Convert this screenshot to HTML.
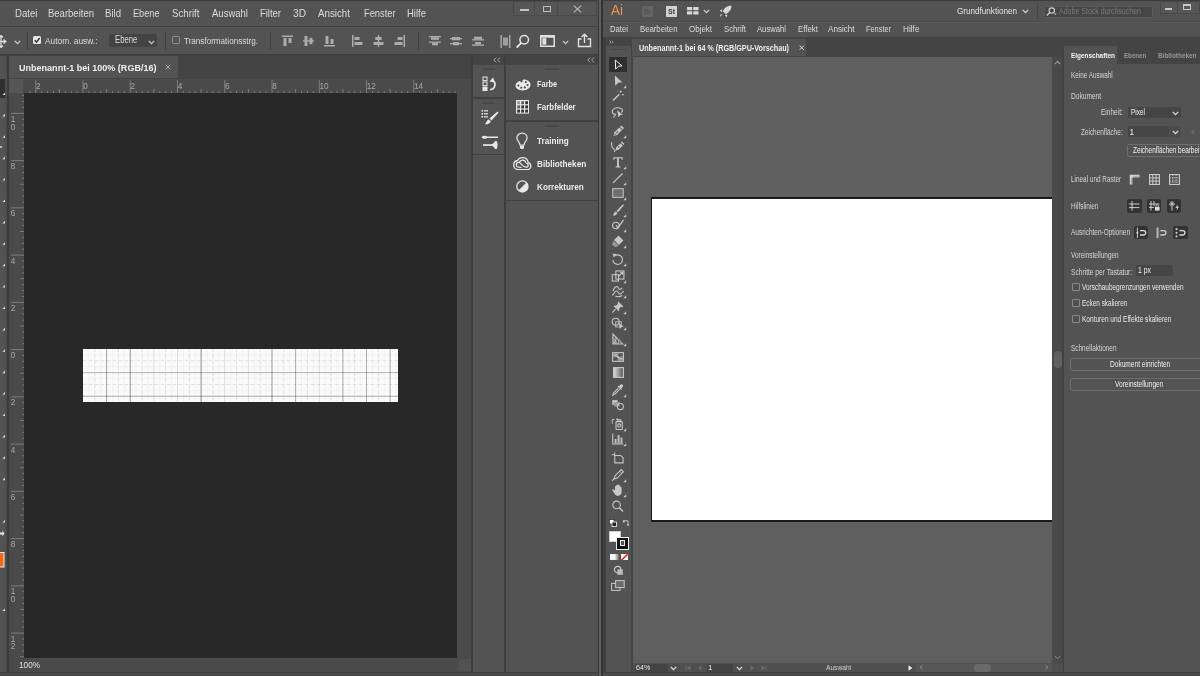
<!DOCTYPE html>
<html lang="de"><head><meta charset="utf-8"><title>Photoshop / Illustrator</title>
<style>
html,body{margin:0;padding:0;background:#535353;}
body{width:1200px;height:676px;overflow:hidden;position:relative;font-family:"Liberation Sans",sans-serif;}
#r{position:absolute;left:0;top:0;width:1200px;height:676px;overflow:hidden;will-change:transform;}
#r div,#r span,#r svg{position:absolute;}
.t{white-space:nowrap;transform-origin:0 50%;}
svg text{font-family:"Liberation Sans",sans-serif;}
</style></head><body><div id="r">
<div style="left:0px;top:0px;width:599px;height:676px;background:#535353;"></div>
<div style="left:0px;top:0px;width:1200px;height:1px;background:#3c3c3c;"></div>
<div style="left:0px;top:26px;width:599px;height:1px;background:#404040;"></div>
<div style="left:0px;top:54px;width:599px;height:2px;background:#404040;"></div>
<div style="left:0px;top:56px;width:472px;height:23px;background:#444444;"></div>
<div style="left:9.2px;top:56px;width:168.8px;height:22.3px;background:#535353;"></div>
<div style="left:0px;top:56px;width:5px;height:620px;background:#535353;"></div>
<div style="left:4.8px;top:56px;width:2.3px;height:620px;background:#4d4d4d;"></div>
<div style="left:7.1px;top:56px;width:2.1px;height:620px;background:#3c3c3c;"></div>
<div style="left:9.2px;top:79px;width:448px;height:14px;background:#4a4a4a;"></div>
<div style="left:9.2px;top:79px;width:14.6px;height:580px;background:#4a4a4a;"></div>
<div style="left:23.6px;top:92.8px;width:433.6px;height:565.4px;background:#282828;"></div>
<div style="left:9.2px;top:658.2px;width:448px;height:14px;background:#4a4a4a;"></div>
<div style="left:457.2px;top:79px;width:14.4px;height:593px;background:#4b4b4b;"></div>
<div style="left:458.5px;top:658.5px;width:12.5px;height:12.5px;background:#525252;"></div>
<div style="left:0px;top:672px;width:599px;height:1px;background:#404040;"></div>
<div style="left:0px;top:673px;width:599px;height:3px;background:#4a4a4a;"></div>
<div style="left:82.5px;top:349px;width:315.5px;height:53px;background:#fafafa;"></div>
<div style="left:471.3px;top:55px;width:1.8px;height:617px;background:#3e3e3e;"></div>
<div style="left:473px;top:55px;width:126px;height:10px;background:#444444;"></div>
<div style="left:504.2px;top:55px;width:2.3px;height:617px;background:#3e3e3e;"></div>
<div style="left:473px;top:97px;width:31px;height:2px;background:#404040;"></div>
<div style="left:473px;top:154px;width:31px;height:1px;background:#404040;"></div>
<div style="left:506px;top:120px;width:93px;height:2px;background:#404040;"></div>
<div style="left:506px;top:200px;width:93px;height:1px;background:#404040;"></div>
<div style="left:598px;top:0px;width:1px;height:676px;background:#3a3a3a;"></div>
<div style="left:599px;top:0px;width:2px;height:676px;background:#606060;"></div>
<div style="left:601px;top:0px;width:2px;height:676px;background:#333;"></div>
<div style="left:603px;top:0px;width:597px;height:676px;background:#535353;"></div>
<div style="left:603px;top:21px;width:597px;height:0.8px;background:#4d4d4d;"></div>
<div style="left:603px;top:21.8px;width:597px;height:0.8px;background:#595959;"></div>
<div style="left:603px;top:36.7px;width:597px;height:20px;background:#444444;"></div>
<div style="left:632px;top:39px;width:174px;height:17px;background:#535353;"></div>
<div style="left:603px;top:38px;width:3px;height:638px;background:#3f3f3f;"></div>
<div style="left:606px;top:38px;width:25px;height:8px;background:#444444;"></div>
<div style="left:606px;top:46px;width:25px;height:626px;background:#535353;"></div>
<div style="left:631px;top:56px;width:1.5px;height:616px;background:#444;"></div>
<div style="left:632.5px;top:56.6px;width:420px;height:606.4px;background:#5f5f5f;"></div>
<div style="left:651px;top:197px;width:402px;height:324.8px;background:#1a1a1a;"></div>
<div style="left:652.3px;top:198.5px;width:401px;height:321.7px;background:#fff;"></div>
<div style="left:1052px;top:56.6px;width:10.5px;height:616px;background:#4a4a4a;"></div>
<div style="left:1062.2px;top:46px;width:2.1px;height:626px;background:#424242;"></div>
<div style="left:632.5px;top:663px;width:430px;height:9px;background:#4f4f4f;"></div>
<div style="left:1064.2px;top:46px;width:136px;height:18px;background:#444444;"></div>
<div style="left:1064.2px;top:46px;width:53.2px;height:18px;background:#535353;"></div>
<div style="left:603px;top:672px;width:597px;height:1px;background:#404040;"></div>
<div style="left:603px;top:673px;width:597px;height:3px;background:#4a4a4a;"></div>
<span class="t" style="left:14.5px;top:8.80px;font-size:10.4px;line-height:10.4px;color:#dcdcdc;transform:scaleX(0.9267);">Datei</span>
<span class="t" style="left:48px;top:8.80px;font-size:10.4px;line-height:10.4px;color:#dcdcdc;transform:scaleX(0.9144);">Bearbeiten</span>
<span class="t" style="left:105px;top:8.80px;font-size:10.4px;line-height:10.4px;color:#dcdcdc;transform:scaleX(0.9226);">Bild</span>
<span class="t" style="left:133px;top:8.80px;font-size:10.4px;line-height:10.4px;color:#dcdcdc;transform:scaleX(0.8812);">Ebene</span>
<span class="t" style="left:171.5px;top:8.80px;font-size:10.4px;line-height:10.4px;color:#dcdcdc;transform:scaleX(0.9330);">Schrift</span>
<span class="t" style="left:211.5px;top:8.80px;font-size:10.4px;line-height:10.4px;color:#dcdcdc;transform:scaleX(0.9158);">Auswahl</span>
<span class="t" style="left:260px;top:8.80px;font-size:10.4px;line-height:10.4px;color:#dcdcdc;transform:scaleX(0.9086);">Filter</span>
<span class="t" style="left:293px;top:8.80px;font-size:10.4px;line-height:10.4px;color:#dcdcdc;transform:scaleX(0.9778);">3D</span>
<span class="t" style="left:318px;top:8.80px;font-size:10.4px;line-height:10.4px;color:#dcdcdc;transform:scaleX(0.9383);">Ansicht</span>
<span class="t" style="left:363.5px;top:8.80px;font-size:10.4px;line-height:10.4px;color:#dcdcdc;transform:scaleX(0.8934);">Fenster</span>
<span class="t" style="left:407px;top:8.80px;font-size:10.4px;line-height:10.4px;color:#dcdcdc;transform:scaleX(0.9132);">Hilfe</span>
<div style="left:512.5px;top:0.5px;width:84px;height:15px;background:#565656;border:1px solid #494949;box-sizing:border-box;"></div>
<div style="left:534.3px;top:1.5px;width:1px;height:13px;background:#494949;"></div>
<div style="left:557.3px;top:1.5px;width:1px;height:13px;background:#494949;"></div>
<div style="left:519.5px;top:9.2px;width:9px;height:2.2px;background:#c2c2c2;"></div>
<div style="left:542.5px;top:5.5px;width:8.5px;height:6.7px;background:transparent;border:1.3px solid #bcbcbc;border-top-width:1.8px;box-sizing:border-box;"></div>
<svg style="left:572.5px;top:5px;" width="9" height="8" viewBox="0 0 9 8"><path d="M0.8 0.6L8.2 7.4M8.2 0.6L0.8 7.4" stroke="#bcbcbc" stroke-width="1.1" fill="none"/></svg>
<div style="left:26.5px;top:32px;width:1px;height:18px;background:#3f3f3f;"></div>
<div style="left:164.5px;top:32px;width:1px;height:18px;background:#3f3f3f;"></div>
<div style="left:269.5px;top:32px;width:1px;height:18px;background:#3f3f3f;"></div>
<div style="left:417.5px;top:32px;width:1px;height:18px;background:#3f3f3f;"></div>
<svg style="left:0px;top:35px;" width="7" height="13" viewBox="0 0 7 13"><path d="M-3 6.5H5.5M1 0.5V12.5M3.5 4.5L6 6.5L3.5 8.5M-1 2.5L1 0.5L3 2.5M-1 10.5L1 12.5L3 10.5" stroke="#d8d8d8" stroke-width="1.3" fill="none"/></svg>
<svg style="left:14px;top:40px;" width="7" height="5" viewBox="0 0 7 5"><path d="M0.8 0.8L3.5 3.6L6.2 0.8" stroke="#d0d0d0" stroke-width="1.2" fill="none"/></svg>
<div style="left:33.2px;top:36px;width:8.2px;height:8.2px;background:#e6e6e6;border-radius:1.5px;"></div>
<svg style="left:33.2px;top:36px;" width="8.2" height="8.2" viewBox="0 0 8.2 8.2"><path d="M1.7 4.2L3.5 6.1L6.7 2" stroke="#333" stroke-width="1.4" fill="none"/></svg>
<span class="t" style="left:45px;top:35.97px;font-size:9.6px;line-height:9.6px;color:#dcdcdc;transform:scaleX(0.8707);">Autom. ausw.:</span>
<div style="left:109px;top:34px;width:48px;height:13px;background:#434343;border-radius:2px;"></div>
<span class="t" style="left:115px;top:35.14px;font-size:10px;line-height:10px;color:#dcdcdc;transform:scaleX(0.7712);">Ebene</span>
<svg style="left:148px;top:39.5px;" width="7" height="5" viewBox="0 0 7 5"><path d="M0.8 0.8L3.5 3.6L6.2 0.8" stroke="#d0d0d0" stroke-width="1.2" fill="none"/></svg>
<div style="left:171.8px;top:36.3px;width:8px;height:8px;background:transparent;border:1px solid #929292;border-radius:1.5px;box-sizing:border-box;"></div>
<span class="t" style="left:184px;top:35.97px;font-size:9.6px;line-height:9.6px;color:#dcdcdc;transform:scaleX(0.8440);">Transformationsstrg.</span>
<span class="t" style="left:18.5px;top:63.16px;font-size:9.5px;line-height:9.5px;color:#f0f0f0;font-weight:bold;transform:scaleX(0.9506);">Unbenannt-1 bei 100% (RGB/16)</span>
<svg style="left:164.5px;top:63.5px;" width="6" height="6" viewBox="0 0 6 6"><path d="M0.7 0.7L5.3 5.3M5.3 0.7L0.7 5.3" stroke="#b8b8b8" stroke-width="0.9" fill="none"/></svg>
<span class="t" style="left:19px;top:661.38px;font-size:9px;line-height:9px;color:#e0e0e0;transform:scaleX(0.9123);">100%</span>
<svg style="left:492.5px;top:56.6px;" width="8" height="6" viewBox="0 0 8 6"><path d="M3.2 0.6L0.8 3L3.2 5.4M7 0.6L4.6 3L7 5.4" stroke="#b4b4b4" stroke-width="0.9" fill="none"/></svg>
<svg style="left:586.7px;top:56.6px;" width="8" height="6" viewBox="0 0 8 6"><path d="M3.2 0.6L0.8 3L3.2 5.4M7 0.6L4.6 3L7 5.4" stroke="#b4b4b4" stroke-width="0.9" fill="none"/></svg>
<div style="left:483px;top:68px;width:12px;height:1.5px;background:#484848;"></div>
<div style="left:483px;top:102px;width:12px;height:1.5px;background:#484848;"></div>
<div style="left:545px;top:68px;width:14px;height:1.5px;background:#484848;"></div>
<div style="left:545px;top:125px;width:14px;height:1.5px;background:#484848;"></div>
<span class="t" style="left:537.3px;top:79.26px;font-size:9.5px;line-height:9.5px;color:#ececec;font-weight:bold;transform:scaleX(0.7808);">Farbe</span>
<span class="t" style="left:537.3px;top:102.36px;font-size:9.5px;line-height:9.5px;color:#ececec;font-weight:bold;transform:scaleX(0.8330);">Farbfelder</span>
<span class="t" style="left:537.3px;top:135.66px;font-size:9.5px;line-height:9.5px;color:#ececec;font-weight:bold;transform:scaleX(0.8580);">Training</span>
<span class="t" style="left:537.3px;top:158.96px;font-size:9.5px;line-height:9.5px;color:#ececec;font-weight:bold;transform:scaleX(0.8631);">Bibliotheken</span>
<span class="t" style="left:537.3px;top:181.96px;font-size:9.5px;line-height:9.5px;color:#ececec;font-weight:bold;transform:scaleX(0.8588);">Korrekturen</span>
<div style="left:9.2px;top:79px;width:14.3px;height:13.8px;background:#565656;"></div>
<svg style="left:24px;top:79px;" width="434" height="14" viewBox="0 0 434 14"><rect x="11.25" y="1" width="1" height="13" fill="#7c7c7c"/><text x="12.05" y="9.9" font-size="8.2" fill="#a8a8a8">2</text><rect x="58.50" y="1" width="1" height="13" fill="#7c7c7c"/><text x="59.30" y="9.9" font-size="8.2" fill="#a8a8a8">0</text><rect x="105.75" y="1" width="1" height="13" fill="#7c7c7c"/><text x="106.55" y="9.9" font-size="8.2" fill="#a8a8a8">2</text><rect x="153.00" y="1" width="1" height="13" fill="#7c7c7c"/><text x="153.80" y="9.9" font-size="8.2" fill="#a8a8a8">4</text><rect x="200.25" y="1" width="1" height="13" fill="#7c7c7c"/><text x="201.05" y="9.9" font-size="8.2" fill="#a8a8a8">6</text><rect x="247.50" y="1" width="1" height="13" fill="#7c7c7c"/><text x="248.30" y="9.9" font-size="8.2" fill="#a8a8a8">8</text><rect x="294.75" y="1" width="1" height="13" fill="#7c7c7c"/><text x="295.55" y="9.9" font-size="8.2" fill="#a8a8a8">10</text><rect x="342.00" y="1" width="1" height="13" fill="#7c7c7c"/><text x="342.80" y="9.9" font-size="8.2" fill="#a8a8a8">12</text><rect x="389.25" y="1" width="1" height="13" fill="#7c7c7c"/><text x="390.05" y="9.9" font-size="8.2" fill="#a8a8a8">14</text><rect x="5.34" y="12" width="1" height="2" fill="#7c7c7c"/><rect x="17.16" y="12" width="1" height="2" fill="#7c7c7c"/><rect x="23.06" y="12" width="1" height="2" fill="#7c7c7c"/><rect x="28.97" y="12" width="1" height="2" fill="#7c7c7c"/><rect x="34.88" y="10" width="1" height="4" fill="#7c7c7c"/><rect x="40.78" y="12" width="1" height="2" fill="#7c7c7c"/><rect x="46.69" y="12" width="1" height="2" fill="#7c7c7c"/><rect x="52.59" y="12" width="1" height="2" fill="#7c7c7c"/><rect x="64.41" y="12" width="1" height="2" fill="#7c7c7c"/><rect x="70.31" y="12" width="1" height="2" fill="#7c7c7c"/><rect x="76.22" y="12" width="1" height="2" fill="#7c7c7c"/><rect x="82.12" y="10" width="1" height="4" fill="#7c7c7c"/><rect x="88.03" y="12" width="1" height="2" fill="#7c7c7c"/><rect x="93.94" y="12" width="1" height="2" fill="#7c7c7c"/><rect x="99.84" y="12" width="1" height="2" fill="#7c7c7c"/><rect x="111.66" y="12" width="1" height="2" fill="#7c7c7c"/><rect x="117.56" y="12" width="1" height="2" fill="#7c7c7c"/><rect x="123.47" y="12" width="1" height="2" fill="#7c7c7c"/><rect x="129.38" y="10" width="1" height="4" fill="#7c7c7c"/><rect x="135.28" y="12" width="1" height="2" fill="#7c7c7c"/><rect x="141.19" y="12" width="1" height="2" fill="#7c7c7c"/><rect x="147.09" y="12" width="1" height="2" fill="#7c7c7c"/><rect x="158.91" y="12" width="1" height="2" fill="#7c7c7c"/><rect x="164.81" y="12" width="1" height="2" fill="#7c7c7c"/><rect x="170.72" y="12" width="1" height="2" fill="#7c7c7c"/><rect x="176.62" y="10" width="1" height="4" fill="#7c7c7c"/><rect x="182.53" y="12" width="1" height="2" fill="#7c7c7c"/><rect x="188.44" y="12" width="1" height="2" fill="#7c7c7c"/><rect x="194.34" y="12" width="1" height="2" fill="#7c7c7c"/><rect x="206.16" y="12" width="1" height="2" fill="#7c7c7c"/><rect x="212.06" y="12" width="1" height="2" fill="#7c7c7c"/><rect x="217.97" y="12" width="1" height="2" fill="#7c7c7c"/><rect x="223.88" y="10" width="1" height="4" fill="#7c7c7c"/><rect x="229.78" y="12" width="1" height="2" fill="#7c7c7c"/><rect x="235.69" y="12" width="1" height="2" fill="#7c7c7c"/><rect x="241.59" y="12" width="1" height="2" fill="#7c7c7c"/><rect x="253.41" y="12" width="1" height="2" fill="#7c7c7c"/><rect x="259.31" y="12" width="1" height="2" fill="#7c7c7c"/><rect x="265.22" y="12" width="1" height="2" fill="#7c7c7c"/><rect x="271.12" y="10" width="1" height="4" fill="#7c7c7c"/><rect x="277.03" y="12" width="1" height="2" fill="#7c7c7c"/><rect x="282.94" y="12" width="1" height="2" fill="#7c7c7c"/><rect x="288.84" y="12" width="1" height="2" fill="#7c7c7c"/><rect x="300.66" y="12" width="1" height="2" fill="#7c7c7c"/><rect x="306.56" y="12" width="1" height="2" fill="#7c7c7c"/><rect x="312.47" y="12" width="1" height="2" fill="#7c7c7c"/><rect x="318.38" y="10" width="1" height="4" fill="#7c7c7c"/><rect x="324.28" y="12" width="1" height="2" fill="#7c7c7c"/><rect x="330.19" y="12" width="1" height="2" fill="#7c7c7c"/><rect x="336.09" y="12" width="1" height="2" fill="#7c7c7c"/><rect x="347.91" y="12" width="1" height="2" fill="#7c7c7c"/><rect x="353.81" y="12" width="1" height="2" fill="#7c7c7c"/><rect x="359.72" y="12" width="1" height="2" fill="#7c7c7c"/><rect x="365.62" y="10" width="1" height="4" fill="#7c7c7c"/><rect x="371.53" y="12" width="1" height="2" fill="#7c7c7c"/><rect x="377.44" y="12" width="1" height="2" fill="#7c7c7c"/><rect x="383.34" y="12" width="1" height="2" fill="#7c7c7c"/><rect x="395.16" y="12" width="1" height="2" fill="#7c7c7c"/><rect x="401.06" y="12" width="1" height="2" fill="#7c7c7c"/><rect x="406.97" y="12" width="1" height="2" fill="#7c7c7c"/><rect x="412.88" y="10" width="1" height="4" fill="#7c7c7c"/><rect x="418.78" y="12" width="1" height="2" fill="#7c7c7c"/><rect x="424.69" y="12" width="1" height="2" fill="#7c7c7c"/><rect x="430.59" y="12" width="1" height="2" fill="#7c7c7c"/></svg>
<svg style="left:10px;top:93px;" width="14" height="565" viewBox="0 0 14 565"><rect x="1" y="19.85" width="13" height="1" fill="#7c7c7c"/><text x="0.7" y="28.85" font-size="8.2" fill="#a8a8a8">1</text><text x="0.7" y="36.55" font-size="8.2" fill="#a8a8a8">0</text><rect x="1" y="67.10" width="13" height="1" fill="#7c7c7c"/><text x="0.7" y="76.10" font-size="8.2" fill="#a8a8a8">8</text><rect x="1" y="114.35" width="13" height="1" fill="#7c7c7c"/><text x="0.7" y="123.35" font-size="8.2" fill="#a8a8a8">6</text><rect x="1" y="161.60" width="13" height="1" fill="#7c7c7c"/><text x="0.7" y="170.60" font-size="8.2" fill="#a8a8a8">4</text><rect x="1" y="208.85" width="13" height="1" fill="#7c7c7c"/><text x="0.7" y="217.85" font-size="8.2" fill="#a8a8a8">2</text><rect x="1" y="256.10" width="13" height="1" fill="#7c7c7c"/><text x="0.7" y="265.10" font-size="8.2" fill="#a8a8a8">0</text><rect x="1" y="303.35" width="13" height="1" fill="#7c7c7c"/><text x="0.7" y="312.35" font-size="8.2" fill="#a8a8a8">2</text><rect x="1" y="350.60" width="13" height="1" fill="#7c7c7c"/><text x="0.7" y="359.60" font-size="8.2" fill="#a8a8a8">4</text><rect x="1" y="397.85" width="13" height="1" fill="#7c7c7c"/><text x="0.7" y="406.85" font-size="8.2" fill="#a8a8a8">6</text><rect x="1" y="445.10" width="13" height="1" fill="#7c7c7c"/><text x="0.7" y="454.10" font-size="8.2" fill="#a8a8a8">8</text><rect x="1" y="492.35" width="13" height="1" fill="#7c7c7c"/><text x="0.7" y="501.35" font-size="8.2" fill="#a8a8a8">1</text><text x="0.7" y="509.05" font-size="8.2" fill="#a8a8a8">0</text><rect x="1" y="539.60" width="13" height="1" fill="#7c7c7c"/><text x="0.7" y="548.60" font-size="8.2" fill="#a8a8a8">1</text><text x="0.7" y="556.30" font-size="8.2" fill="#a8a8a8">2</text><rect x="12" y="2.13" width="2" height="1" fill="#7c7c7c"/><rect x="12" y="8.04" width="2" height="1" fill="#7c7c7c"/><rect x="12" y="13.94" width="2" height="1" fill="#7c7c7c"/><rect x="12" y="25.76" width="2" height="1" fill="#7c7c7c"/><rect x="12" y="31.66" width="2" height="1" fill="#7c7c7c"/><rect x="12" y="37.57" width="2" height="1" fill="#7c7c7c"/><rect x="10" y="43.48" width="4" height="1" fill="#7c7c7c"/><rect x="12" y="49.38" width="2" height="1" fill="#7c7c7c"/><rect x="12" y="55.29" width="2" height="1" fill="#7c7c7c"/><rect x="12" y="61.19" width="2" height="1" fill="#7c7c7c"/><rect x="12" y="73.01" width="2" height="1" fill="#7c7c7c"/><rect x="12" y="78.91" width="2" height="1" fill="#7c7c7c"/><rect x="12" y="84.82" width="2" height="1" fill="#7c7c7c"/><rect x="10" y="90.73" width="4" height="1" fill="#7c7c7c"/><rect x="12" y="96.63" width="2" height="1" fill="#7c7c7c"/><rect x="12" y="102.54" width="2" height="1" fill="#7c7c7c"/><rect x="12" y="108.44" width="2" height="1" fill="#7c7c7c"/><rect x="12" y="120.26" width="2" height="1" fill="#7c7c7c"/><rect x="12" y="126.16" width="2" height="1" fill="#7c7c7c"/><rect x="12" y="132.07" width="2" height="1" fill="#7c7c7c"/><rect x="10" y="137.98" width="4" height="1" fill="#7c7c7c"/><rect x="12" y="143.88" width="2" height="1" fill="#7c7c7c"/><rect x="12" y="149.79" width="2" height="1" fill="#7c7c7c"/><rect x="12" y="155.69" width="2" height="1" fill="#7c7c7c"/><rect x="12" y="167.51" width="2" height="1" fill="#7c7c7c"/><rect x="12" y="173.41" width="2" height="1" fill="#7c7c7c"/><rect x="12" y="179.32" width="2" height="1" fill="#7c7c7c"/><rect x="10" y="185.23" width="4" height="1" fill="#7c7c7c"/><rect x="12" y="191.13" width="2" height="1" fill="#7c7c7c"/><rect x="12" y="197.04" width="2" height="1" fill="#7c7c7c"/><rect x="12" y="202.94" width="2" height="1" fill="#7c7c7c"/><rect x="12" y="214.76" width="2" height="1" fill="#7c7c7c"/><rect x="12" y="220.66" width="2" height="1" fill="#7c7c7c"/><rect x="12" y="226.57" width="2" height="1" fill="#7c7c7c"/><rect x="10" y="232.48" width="4" height="1" fill="#7c7c7c"/><rect x="12" y="238.38" width="2" height="1" fill="#7c7c7c"/><rect x="12" y="244.29" width="2" height="1" fill="#7c7c7c"/><rect x="12" y="250.19" width="2" height="1" fill="#7c7c7c"/><rect x="12" y="262.01" width="2" height="1" fill="#7c7c7c"/><rect x="12" y="267.91" width="2" height="1" fill="#7c7c7c"/><rect x="12" y="273.82" width="2" height="1" fill="#7c7c7c"/><rect x="10" y="279.73" width="4" height="1" fill="#7c7c7c"/><rect x="12" y="285.63" width="2" height="1" fill="#7c7c7c"/><rect x="12" y="291.54" width="2" height="1" fill="#7c7c7c"/><rect x="12" y="297.44" width="2" height="1" fill="#7c7c7c"/><rect x="12" y="309.26" width="2" height="1" fill="#7c7c7c"/><rect x="12" y="315.16" width="2" height="1" fill="#7c7c7c"/><rect x="12" y="321.07" width="2" height="1" fill="#7c7c7c"/><rect x="10" y="326.98" width="4" height="1" fill="#7c7c7c"/><rect x="12" y="332.88" width="2" height="1" fill="#7c7c7c"/><rect x="12" y="338.79" width="2" height="1" fill="#7c7c7c"/><rect x="12" y="344.69" width="2" height="1" fill="#7c7c7c"/><rect x="12" y="356.51" width="2" height="1" fill="#7c7c7c"/><rect x="12" y="362.41" width="2" height="1" fill="#7c7c7c"/><rect x="12" y="368.32" width="2" height="1" fill="#7c7c7c"/><rect x="10" y="374.23" width="4" height="1" fill="#7c7c7c"/><rect x="12" y="380.13" width="2" height="1" fill="#7c7c7c"/><rect x="12" y="386.04" width="2" height="1" fill="#7c7c7c"/><rect x="12" y="391.94" width="2" height="1" fill="#7c7c7c"/><rect x="12" y="403.76" width="2" height="1" fill="#7c7c7c"/><rect x="12" y="409.66" width="2" height="1" fill="#7c7c7c"/><rect x="12" y="415.57" width="2" height="1" fill="#7c7c7c"/><rect x="10" y="421.48" width="4" height="1" fill="#7c7c7c"/><rect x="12" y="427.38" width="2" height="1" fill="#7c7c7c"/><rect x="12" y="433.29" width="2" height="1" fill="#7c7c7c"/><rect x="12" y="439.19" width="2" height="1" fill="#7c7c7c"/><rect x="12" y="451.01" width="2" height="1" fill="#7c7c7c"/><rect x="12" y="456.91" width="2" height="1" fill="#7c7c7c"/><rect x="12" y="462.82" width="2" height="1" fill="#7c7c7c"/><rect x="10" y="468.73" width="4" height="1" fill="#7c7c7c"/><rect x="12" y="474.63" width="2" height="1" fill="#7c7c7c"/><rect x="12" y="480.54" width="2" height="1" fill="#7c7c7c"/><rect x="12" y="486.44" width="2" height="1" fill="#7c7c7c"/><rect x="12" y="498.26" width="2" height="1" fill="#7c7c7c"/><rect x="12" y="504.16" width="2" height="1" fill="#7c7c7c"/><rect x="12" y="510.07" width="2" height="1" fill="#7c7c7c"/><rect x="10" y="515.98" width="4" height="1" fill="#7c7c7c"/><rect x="12" y="521.88" width="2" height="1" fill="#7c7c7c"/><rect x="12" y="527.79" width="2" height="1" fill="#7c7c7c"/><rect x="12" y="533.69" width="2" height="1" fill="#7c7c7c"/><rect x="12" y="545.51" width="2" height="1" fill="#7c7c7c"/><rect x="12" y="551.41" width="2" height="1" fill="#7c7c7c"/><rect x="12" y="557.32" width="2" height="1" fill="#7c7c7c"/><rect x="10" y="563.23" width="4" height="1" fill="#7c7c7c"/></svg>
<div style="left:0px;top:79px;width:5px;height:19px;background:#303030;"></div>
<svg style="left:0px;top:0px;" width="6" height="676" viewBox="0 0 6 676"><path d="M5 92.4V95.0H2.4Z" fill="#dcdcdc"/><path d="M5 113.8V116.4H2.4Z" fill="#dcdcdc"/><path d="M5 135.2V137.8H2.4Z" fill="#dcdcdc"/><path d="M5 156.6V159.2H2.4Z" fill="#dcdcdc"/><path d="M5 178.0V180.6H2.4Z" fill="#dcdcdc"/><path d="M5 199.4V202.0H2.4Z" fill="#dcdcdc"/><path d="M5 220.8V223.4H2.4Z" fill="#dcdcdc"/><path d="M5 242.2V244.8H2.4Z" fill="#dcdcdc"/><path d="M5 263.6V266.2H2.4Z" fill="#dcdcdc"/><path d="M5 285.0V287.6H2.4Z" fill="#dcdcdc"/><path d="M5 306.4V309.0H2.4Z" fill="#dcdcdc"/><path d="M5 327.8V330.4H2.4Z" fill="#dcdcdc"/><path d="M5 349.2V351.8H2.4Z" fill="#dcdcdc"/><path d="M5 370.6V373.2H2.4Z" fill="#dcdcdc"/><path d="M5 392.0V394.6H2.4Z" fill="#dcdcdc"/><path d="M5 413.4V416.0H2.4Z" fill="#dcdcdc"/><path d="M5 434.8V437.4H2.4Z" fill="#dcdcdc"/><path d="M5 456.2V458.8H2.4Z" fill="#dcdcdc"/><path d="M5 477.6V480.2H2.4Z" fill="#dcdcdc"/><path d="M5 519.9V522.5H2.4Z" fill="#dcdcdc"/><path d="M0 532.6h2.4v-2l2 3-2 3v-2H0z" fill="#e8e8e8"/><rect x="-1" y="552.5" width="5" height="14.5" fill="#f2681a" stroke="#eee" stroke-width="1"/><path d="M5 611V608.4L2.4 611Z" fill="#e0e0e0"/><circle cx="1" cy="147" r="1" fill="#ddd"/></svg>
<svg style="left:82.5px;top:349px;" width="315.5" height="53" viewBox="0 0 315.5 53"><rect x="5.41" y="0" width="1" height="53" fill="#000" opacity="0.035"/><rect x="11.31" y="0" width="1" height="53" fill="#000" opacity="0.035"/><rect x="17.22" y="0" width="1" height="53" fill="#000" opacity="0.035"/><rect x="23.12" y="0" width="1" height="53" fill="#000" opacity="0.035"/><rect x="29.03" y="0" width="1" height="53" fill="#000" opacity="0.035"/><rect x="34.94" y="0" width="1" height="53" fill="#000" opacity="0.035"/><rect x="40.84" y="0" width="1" height="53" fill="#000" opacity="0.035"/><rect x="46.75" y="0" width="1" height="53" fill="#000" opacity="0.035"/><rect x="52.66" y="0" width="1" height="53" fill="#000" opacity="0.035"/><rect x="58.56" y="0" width="1" height="53" fill="#000" opacity="0.035"/><rect x="64.47" y="0" width="1" height="53" fill="#000" opacity="0.035"/><rect x="70.38" y="0" width="1" height="53" fill="#000" opacity="0.035"/><rect x="76.28" y="0" width="1" height="53" fill="#000" opacity="0.035"/><rect x="82.19" y="0" width="1" height="53" fill="#000" opacity="0.035"/><rect x="88.09" y="0" width="1" height="53" fill="#000" opacity="0.035"/><rect x="94.00" y="0" width="1" height="53" fill="#000" opacity="0.035"/><rect x="99.91" y="0" width="1" height="53" fill="#000" opacity="0.035"/><rect x="105.81" y="0" width="1" height="53" fill="#000" opacity="0.035"/><rect x="111.72" y="0" width="1" height="53" fill="#000" opacity="0.035"/><rect x="117.62" y="0" width="1" height="53" fill="#000" opacity="0.035"/><rect x="123.53" y="0" width="1" height="53" fill="#000" opacity="0.035"/><rect x="129.44" y="0" width="1" height="53" fill="#000" opacity="0.035"/><rect x="135.34" y="0" width="1" height="53" fill="#000" opacity="0.035"/><rect x="141.25" y="0" width="1" height="53" fill="#000" opacity="0.035"/><rect x="147.16" y="0" width="1" height="53" fill="#000" opacity="0.035"/><rect x="153.06" y="0" width="1" height="53" fill="#000" opacity="0.035"/><rect x="158.97" y="0" width="1" height="53" fill="#000" opacity="0.035"/><rect x="164.88" y="0" width="1" height="53" fill="#000" opacity="0.035"/><rect x="170.78" y="0" width="1" height="53" fill="#000" opacity="0.035"/><rect x="176.69" y="0" width="1" height="53" fill="#000" opacity="0.035"/><rect x="182.59" y="0" width="1" height="53" fill="#000" opacity="0.035"/><rect x="188.50" y="0" width="1" height="53" fill="#000" opacity="0.035"/><rect x="194.41" y="0" width="1" height="53" fill="#000" opacity="0.035"/><rect x="200.31" y="0" width="1" height="53" fill="#000" opacity="0.035"/><rect x="206.22" y="0" width="1" height="53" fill="#000" opacity="0.035"/><rect x="212.12" y="0" width="1" height="53" fill="#000" opacity="0.035"/><rect x="218.03" y="0" width="1" height="53" fill="#000" opacity="0.035"/><rect x="223.94" y="0" width="1" height="53" fill="#000" opacity="0.035"/><rect x="229.84" y="0" width="1" height="53" fill="#000" opacity="0.035"/><rect x="235.75" y="0" width="1" height="53" fill="#000" opacity="0.035"/><rect x="241.66" y="0" width="1" height="53" fill="#000" opacity="0.035"/><rect x="247.56" y="0" width="1" height="53" fill="#000" opacity="0.035"/><rect x="253.47" y="0" width="1" height="53" fill="#000" opacity="0.035"/><rect x="259.38" y="0" width="1" height="53" fill="#000" opacity="0.035"/><rect x="265.28" y="0" width="1" height="53" fill="#000" opacity="0.035"/><rect x="271.19" y="0" width="1" height="53" fill="#000" opacity="0.035"/><rect x="277.09" y="0" width="1" height="53" fill="#000" opacity="0.035"/><rect x="283.00" y="0" width="1" height="53" fill="#000" opacity="0.035"/><rect x="288.91" y="0" width="1" height="53" fill="#000" opacity="0.035"/><rect x="294.81" y="0" width="1" height="53" fill="#000" opacity="0.035"/><rect x="300.72" y="0" width="1" height="53" fill="#000" opacity="0.035"/><rect x="306.62" y="0" width="1" height="53" fill="#000" opacity="0.035"/><rect x="312.53" y="0" width="1" height="53" fill="#000" opacity="0.035"/><rect x="0" y="5.41" width="315.5" height="1" fill="#000" opacity="0.035"/><rect x="0" y="11.31" width="315.5" height="1" fill="#000" opacity="0.035"/><rect x="0" y="17.22" width="315.5" height="1" fill="#000" opacity="0.035"/><rect x="0" y="23.12" width="315.5" height="1" fill="#000" opacity="0.035"/><rect x="0" y="29.03" width="315.5" height="1" fill="#000" opacity="0.035"/><rect x="0" y="34.94" width="315.5" height="1" fill="#000" opacity="0.035"/><rect x="0" y="40.84" width="315.5" height="1" fill="#000" opacity="0.035"/><rect x="0" y="46.75" width="315.5" height="1" fill="#000" opacity="0.035"/><line x1="11.81" y1="0" x2="11.81" y2="53" stroke="#000" stroke-width="1" stroke-dasharray="3 3" opacity="0.08"/><line x1="35.44" y1="0" x2="35.44" y2="53" stroke="#000" stroke-width="1" stroke-dasharray="3 3" opacity="0.08"/><line x1="59.06" y1="0" x2="59.06" y2="53" stroke="#000" stroke-width="1" stroke-dasharray="3 3" opacity="0.08"/><line x1="82.69" y1="0" x2="82.69" y2="53" stroke="#000" stroke-width="1" stroke-dasharray="3 3" opacity="0.08"/><line x1="106.31" y1="0" x2="106.31" y2="53" stroke="#000" stroke-width="1" stroke-dasharray="3 3" opacity="0.08"/><line x1="129.94" y1="0" x2="129.94" y2="53" stroke="#000" stroke-width="1" stroke-dasharray="3 3" opacity="0.08"/><line x1="153.56" y1="0" x2="153.56" y2="53" stroke="#000" stroke-width="1" stroke-dasharray="3 3" opacity="0.08"/><line x1="177.19" y1="0" x2="177.19" y2="53" stroke="#000" stroke-width="1" stroke-dasharray="3 3" opacity="0.08"/><line x1="200.81" y1="0" x2="200.81" y2="53" stroke="#000" stroke-width="1" stroke-dasharray="3 3" opacity="0.08"/><line x1="224.44" y1="0" x2="224.44" y2="53" stroke="#000" stroke-width="1" stroke-dasharray="3 3" opacity="0.08"/><line x1="248.06" y1="0" x2="248.06" y2="53" stroke="#000" stroke-width="1" stroke-dasharray="3 3" opacity="0.08"/><line x1="271.69" y1="0" x2="271.69" y2="53" stroke="#000" stroke-width="1" stroke-dasharray="3 3" opacity="0.08"/><line x1="295.31" y1="0" x2="295.31" y2="53" stroke="#000" stroke-width="1" stroke-dasharray="3 3" opacity="0.08"/><line x1="0" y1="11.81" x2="315.5" y2="11.81" stroke="#000" stroke-width="1" stroke-dasharray="3 3" opacity="0.08"/><line x1="0" y1="35.44" x2="315.5" y2="35.44" stroke="#000" stroke-width="1" stroke-dasharray="3 3" opacity="0.08"/><rect x="23.12" y="0" width="1" height="53" fill="#000" opacity="0.33"/><rect x="46.75" y="0" width="1" height="53" fill="#000" opacity="0.38"/><rect x="70.38" y="0" width="1" height="53" fill="#000" opacity="0.08"/><rect x="94.00" y="0" width="1" height="53" fill="#000" opacity="0.08"/><rect x="117.62" y="0" width="1" height="53" fill="#000" opacity="0.42"/><rect x="141.25" y="0" width="1" height="53" fill="#000" opacity="0.08"/><rect x="164.88" y="0" width="1" height="53" fill="#000" opacity="0.08"/><rect x="188.50" y="0" width="1" height="53" fill="#000" opacity="0.36"/><rect x="212.12" y="0" width="1" height="53" fill="#000" opacity="0.3"/><rect x="235.75" y="0" width="1" height="53" fill="#000" opacity="0.08"/><rect x="259.38" y="0" width="1" height="53" fill="#000" opacity="0.3"/><rect x="283.00" y="0" width="1" height="53" fill="#000" opacity="0.27"/><rect x="306.62" y="0" width="1" height="53" fill="#000" opacity="0.27"/><rect x="0" y="23.12" width="315.5" height="1" fill="#000" opacity="0.25"/><rect x="0" y="46.75" width="315.5" height="1" fill="#000" opacity="0.3"/></svg>
<svg style="left:282px;top:35px;" width="11" height="12" viewBox="0 0 11 12"><rect x="0" y="0.5" width="11" height="1.5" fill="#ababab"/><rect x="1.5" y="3" width="3" height="8" fill="#ababab"/><rect x="6.5" y="3" width="3" height="5" fill="#ababab"/></svg>
<svg style="left:303px;top:35px;" width="11" height="12" viewBox="0 0 11 12"><rect x="0" y="5.2" width="11" height="1.4" fill="#ababab"/><rect x="1.5" y="1" width="3" height="10" fill="#ababab"/><rect x="6.5" y="2.8" width="3" height="6.4" fill="#ababab"/></svg>
<svg style="left:324px;top:35px;" width="11" height="12" viewBox="0 0 11 12"><rect x="0" y="10" width="11" height="1.5" fill="#ababab"/><rect x="1.5" y="1" width="3" height="8" fill="#ababab"/><rect x="6.5" y="4" width="3" height="5" fill="#ababab"/></svg>
<svg style="left:352px;top:35px;" width="11" height="12" viewBox="0 0 11 12"><rect x="0" y="0" width="1.5" height="12" fill="#ababab"/><rect x="2.5" y="2" width="5" height="3" fill="#ababab"/><rect x="2.5" y="7" width="8" height="3" fill="#ababab"/></svg>
<svg style="left:373px;top:35px;" width="11" height="12" viewBox="0 0 11 12"><rect x="4.8" y="0" width="1.4" height="12" fill="#ababab"/><rect x="2.3" y="2" width="6.4" height="3" fill="#ababab"/><rect x="0.5" y="7" width="10" height="3" fill="#ababab"/></svg>
<svg style="left:394px;top:35px;" width="11" height="12" viewBox="0 0 11 12"><rect x="9.5" y="0" width="1.5" height="12" fill="#ababab"/><rect x="3.5" y="2" width="5" height="3" fill="#ababab"/><rect x="0.5" y="7" width="8" height="3" fill="#ababab"/></svg>
<svg style="left:429px;top:36px;" width="12" height="10" viewBox="0 0 12 10"><rect x="0" y="0" width="12" height="1.3" fill="#ababab"/><rect x="2" y="1.3" width="8" height="2.5" fill="#ababab"/><rect x="0" y="5.5" width="12" height="1.3" fill="#ababab"/><rect x="3" y="6.8" width="6" height="2.5" fill="#ababab"/></svg>
<svg style="left:450px;top:36px;" width="12" height="10" viewBox="0 0 12 10"><rect x="0" y="2" width="12" height="1.3" fill="#ababab"/><rect x="2" y="1" width="8" height="3.3" fill="#ababab"/><rect x="0" y="7" width="12" height="1.3" fill="#ababab"/><rect x="3" y="6" width="6" height="3.3" fill="#ababab"/></svg>
<svg style="left:472px;top:36px;" width="12" height="10" viewBox="0 0 12 10"><rect x="0" y="3.2" width="12" height="1.3" fill="#ababab"/><rect x="2" y="0.7" width="8" height="2.5" fill="#ababab"/><rect x="0" y="8.5" width="12" height="1.3" fill="#ababab"/><rect x="3" y="6" width="6" height="2.5" fill="#ababab"/></svg>
<svg style="left:500px;top:34.5px;" width="11" height="13" viewBox="0 0 11 13"><rect x="0.5" y="0" width="1.4" height="13" fill="#ababab"/><rect x="9" y="0" width="1.4" height="13" fill="#ababab"/><rect x="3" y="2.5" width="5" height="8" fill="#ababab" opacity="0.85"/></svg>
<svg style="left:516px;top:34px;" width="14" height="14" viewBox="0 0 14 14"><circle cx="8.2" cy="5.8" r="4.3" fill="none" stroke="#e4e4e4" stroke-width="1.5"/><path d="M5 9.2L1.2 13" stroke="#e4e4e4" stroke-width="1.8" stroke-linecap="round"/></svg>
<svg style="left:540px;top:35px;" width="15" height="12" viewBox="0 0 15 12"><rect x="0.75" y="0.75" width="13.5" height="10.5" fill="none" stroke="#e0e0e0" stroke-width="1.5"/><rect x="2.3" y="3.2" width="4" height="6.5" fill="#e0e0e0"/><rect x="0.75" y="0.75" width="13.5" height="2" fill="#e0e0e0"/></svg>
<svg style="left:562px;top:39.5px;" width="7" height="5" viewBox="0 0 7 5"><path d="M0.8 0.8L3.5 3.6L6.2 0.8" stroke="#d0d0d0" stroke-width="1.2" fill="none"/></svg>
<svg style="left:577px;top:33px;" width="15" height="15" viewBox="0 0 15 15"><path d="M4.5 6H1.5V13.5H13.5V6H10.5" fill="none" stroke="#e0e0e0" stroke-width="1.4"/><path d="M7.5 10V1.5M4.6 4L7.5 1.2L10.4 4" fill="none" stroke="#e0e0e0" stroke-width="1.4"/></svg>
<svg style="left:482px;top:76px;" width="16" height="16" viewBox="0 0 16 16"><rect x="1" y="1" width="4" height="3.6" fill="none" stroke="#e8e8e8" stroke-width="1"/><rect x="1" y="6" width="4" height="3.6" fill="none" stroke="#e8e8e8" stroke-width="1"/><rect x="0.5" y="10.6" width="5" height="4.4" fill="#e8e8e8"/><path d="M8 13.8C13.5 13 14.5 7 10.8 4.4" fill="none" stroke="#e8e8e8" stroke-width="1.6"/><path d="M7.5 5.5L11.2 1.2L12.6 6.6Z" fill="#e8e8e8"/></svg>
<svg style="left:481px;top:108px;" width="18" height="18" viewBox="0 0 18 18"><rect x="0.5" y="2" width="1.6" height="1.6" fill="#e8e8e8"/><rect x="0.5" y="5" width="1.6" height="1.6" fill="#e8e8e8"/><rect x="0.5" y="8" width="1.6" height="1.6" fill="#e8e8e8"/><rect x="3" y="2.2" width="4" height="1.2" fill="#e8e8e8"/><rect x="3" y="5.2" width="4" height="1.2" fill="#e8e8e8"/><rect x="3" y="8.2" width="4" height="1.2" fill="#e8e8e8"/><path d="M16.5 3.5L17.5 4.8L10.5 12.5L8.4 10.6Z" fill="#e8e8e8"/><path d="M7.8 11.4L9.8 13.2C8.8 16 5.5 16.8 3.8 16C5.6 15 5.4 12 7.8 11.4Z" fill="#e8e8e8"/></svg>
<svg style="left:481px;top:134px;" width="18" height="16" viewBox="0 0 18 16"><path d="M0.5 3.2C2 1.2 5 1.4 6.2 2.4H17V4H6.2C5 5 2 5.2 0.5 3.2Z" fill="#e8e8e8"/><rect x="2" y="10.2" width="9" height="1.7" fill="#e8e8e8"/><path d="M10.5 10.3C12.5 9.8 13.3 8.3 14 7H15.5C17 8.5 17 13.5 15.5 15H14C13.3 13.7 12.5 12.2 10.5 11.8Z" fill="#e8e8e8"/></svg>
<svg style="left:514.5px;top:78.5px;" width="16" height="12" viewBox="0 0 16 12"><path d="M8.6 0.5C12.6 0.5 15.5 2.9 15.5 5.8C15.5 9 12 11.5 7.6 11.5C3.4 11.5 0.5 9.4 0.5 6.6C0.5 4.6 2 3 4.2 2.2C5 1.9 5.6 2.3 5.9 2.9C6.3 3.6 7.2 3.6 7.4 2.8C7.6 1.6 7.4 0.5 8.6 0.5Z" fill="#e8e8e8"/><circle cx="3.4" cy="6.6" r="1.05" fill="#4a4a4a"/><circle cx="6.2" cy="8.8" r="1.05" fill="#4a4a4a"/><circle cx="9.8" cy="8.4" r="1.05" fill="#4a4a4a"/><circle cx="12.6" cy="6" r="1.05" fill="#4a4a4a"/><circle cx="10.8" cy="3" r="1.05" fill="#4a4a4a"/></svg>
<svg style="left:516px;top:100.4px;" width="13" height="13.6" viewBox="0 0 13 13.6"><rect x="0" y="0" width="13" height="13.6" fill="#e8e8e8"/><rect x="1.20" y="1.20" width="2.8" height="3" fill="#9a9a9a"/><rect x="5.20" y="1.20" width="2.8" height="3" fill="#5e5e5e"/><rect x="9.20" y="1.20" width="2.8" height="3" fill="#363636"/><rect x="1.20" y="5.40" width="2.8" height="3" fill="#5e5e5e"/><rect x="5.20" y="5.40" width="2.8" height="3" fill="#363636"/><rect x="9.20" y="5.40" width="2.8" height="3" fill="#363636"/><rect x="1.20" y="9.60" width="2.8" height="3" fill="#363636"/><rect x="5.20" y="9.60" width="2.8" height="3" fill="#363636"/><rect x="9.20" y="9.60" width="2.8" height="3" fill="#363636"/></svg>
<svg style="left:516px;top:131.5px;" width="12" height="18" viewBox="0 0 12 18"><path d="M6 1.1C3.1 1.1 0.9 3.3 0.9 6.1C0.9 8 1.9 9.2 3 10.4C3.6 11.1 3.9 11.8 3.9 13H8.1C8.1 11.8 8.4 11.1 9 10.4C10.1 9.2 11.1 8 11.1 6.1C11.1 3.3 8.9 1.1 6 1.1Z" fill="none" stroke="#e8e8e8" stroke-width="1.2"/><path d="M4 13.4H8V15.4C8 17.6 4 17.6 4 15.4Z" fill="#e8e8e8"/></svg>
<svg style="left:513px;top:156.8px;" width="18.5" height="13.6" viewBox="0 0 18.5 13.6"><path d="M5.6 12.6C2.8 12.6 0.7 10.6 0.7 8C0.7 5.6 2.4 3.8 4.6 3.5C5.6 1.8 7.4 0.7 9.5 0.7C12.4 0.7 14.7 2.7 15.2 5.3C16.8 5.9 17.8 7.3 17.8 9C17.8 11 16.2 12.6 14.2 12.6Z" fill="none" stroke="#e8e8e8" stroke-width="1.3"/><path d="M6 10.2C4.4 10.2 3.3 9.2 3.3 7.8C3.3 6.4 4.4 5.4 5.8 5.4C8.2 5.4 9.6 10.2 12.8 10.2C14.2 10.2 15.2 9.4 15.2 8.2C15.2 7 14.2 6.2 13 6.4M6.4 5C7 3.8 8.2 3.1 9.6 3.1C11.4 3.1 12.6 4.2 12.9 5.8M8.4 10.2C7.8 10.6 7 10.4 6 10.2" fill="none" stroke="#e8e8e8" stroke-width="1.2"/></svg>
<svg style="left:515.8px;top:180.2px;" width="12.8" height="12.8" viewBox="0 0 12.8 12.8"><circle cx="6.4" cy="6.4" r="5.6" fill="none" stroke="#e8e8e8" stroke-width="1.3"/><path d="M10.4 2.4A5.65 5.65 0 0 1 2.4 10.4Z" fill="#e8e8e8"/></svg>
<span class="t" style="left:610.5px;top:2.73px;font-size:14.5px;line-height:14.5px;color:#e59458;transform:scaleX(0.9307);">Ai</span>
<div style="left:642px;top:6px;width:10.5px;height:10.5px;background:#646464;"></div>
<span class="t" style="left:643.6px;top:7.85px;font-size:7.5px;line-height:7.5px;color:#525252;font-weight:bold;transform:scaleX(0.8878);">Br</span>
<div style="left:666px;top:6px;width:10.5px;height:10.5px;background:#d2d2d2;"></div>
<span class="t" style="left:668px;top:7.85px;font-size:7.5px;line-height:7.5px;color:#3c3c3c;font-weight:bold;transform:scaleX(0.9333);">St</span>
<svg style="left:686.5px;top:7px;" width="12" height="8" viewBox="0 0 12 8"><rect x="0" y="0" width="5.2" height="3.2" fill="#d8d8d8"/><rect x="6.3" y="0" width="5.2" height="3.2" fill="#d8d8d8"/><rect x="0" y="4.3" width="5.2" height="3.2" fill="#d8d8d8"/><rect x="6.3" y="4.3" width="5.2" height="3.2" fill="#d8d8d8"/></svg>
<svg style="left:703px;top:8.5px;" width="7" height="5" viewBox="0 0 7 5"><path d="M0.8 0.8L3.5 3.6L6.2 0.8" stroke="#d8d8d8" stroke-width="1.2" fill="none"/></svg>
<svg style="left:719px;top:4.5px;" width="13" height="13" viewBox="0 0 13 13"><path d="M12.4 0.6C8.6 0.4 5.6 2.6 3.8 6.2L6.8 9.2C10.4 7.4 12.6 4.4 12.4 0.6Z" fill="#d8d8d8"/><path d="M3.4 4.6L0.8 5.2L2.8 7.2ZM8.4 9.6L7.8 12.2L5.8 10.2ZM3.4 9.6L1 12L1.6 9.2Z" fill="#d8d8d8"/></svg>
<span class="t" style="left:957px;top:6.16px;font-size:9.5px;line-height:9.5px;color:#e4e4e4;transform:scaleX(0.8542);">Grundfunktionen</span>
<svg style="left:1022px;top:8.5px;" width="7" height="5" viewBox="0 0 7 5"><path d="M0.8 0.8L3.5 3.6L6.2 0.8" stroke="#d8d8d8" stroke-width="1.2" fill="none"/></svg>
<div style="left:1037px;top:3px;width:1px;height:16px;background:#474747;"></div>
<div style="left:1043.5px;top:5.5px;width:109.5px;height:12px;background:#464646;border:1px solid #5a5a5a;box-sizing:border-box;border-radius:1px;"></div>
<svg style="left:1045.5px;top:7px;" width="11" height="9" viewBox="0 0 11 9"><circle cx="5.8" cy="3.6" r="2.7" fill="none" stroke="#d0d0d0" stroke-width="1.1"/><path d="M3.8 5.6L0.8 8.4" stroke="#d0d0d0" stroke-width="1.3"/><path d="M8 6.5H10.6L9.3 8Z" fill="#d0d0d0"/></svg>
<span class="t" style="left:1059px;top:7.00px;font-size:8.5px;line-height:8.5px;color:#7a7a7a;transform:scaleX(0.8263);">Adobe Stock durchsuchen</span>
<div style="left:1160px;top:1px;width:40px;height:13px;background:#575757;border:1px solid #484848;box-sizing:border-box;"></div>
<div style="left:1176.5px;top:2px;width:1px;height:11px;background:#484848;"></div>
<div style="left:1165px;top:8px;width:7px;height:1.8px;background:#c8c8c8;"></div>
<div style="left:1182.5px;top:4px;width:8px;height:6px;background:transparent;border:1.4px solid #c8c8c8;border-top-width:2px;box-sizing:border-box;"></div>
<span class="t" style="left:610px;top:24.93px;font-size:9.3px;line-height:9.3px;color:#dcdcdc;transform:scaleX(0.8291);">Datei</span>
<span class="t" style="left:639.5px;top:24.93px;font-size:9.3px;line-height:9.3px;color:#dcdcdc;transform:scaleX(0.8336);">Bearbeiten</span>
<span class="t" style="left:689px;top:24.93px;font-size:9.3px;line-height:9.3px;color:#dcdcdc;transform:scaleX(0.8557);">Objekt</span>
<span class="t" style="left:724px;top:24.93px;font-size:9.3px;line-height:9.3px;color:#dcdcdc;transform:scaleX(0.8347);">Schrift</span>
<span class="t" style="left:757px;top:24.93px;font-size:9.3px;line-height:9.3px;color:#dcdcdc;transform:scaleX(0.8250);">Auswahl</span>
<span class="t" style="left:797.5px;top:24.93px;font-size:9.3px;line-height:9.3px;color:#dcdcdc;transform:scaleX(0.8471);">Effekt</span>
<span class="t" style="left:828px;top:24.93px;font-size:9.3px;line-height:9.3px;color:#dcdcdc;transform:scaleX(0.8689);">Ansicht</span>
<span class="t" style="left:866px;top:24.93px;font-size:9.3px;line-height:9.3px;color:#dcdcdc;transform:scaleX(0.7929);">Fenster</span>
<span class="t" style="left:902.5px;top:24.93px;font-size:9.3px;line-height:9.3px;color:#dcdcdc;transform:scaleX(0.8869);">Hilfe</span>
<span class="t" style="left:639px;top:43.57px;font-size:8.3px;line-height:8.3px;color:#f0f0f0;font-weight:bold;transform:scaleX(0.8681);">Unbenannt-1 bei 64 % (RGB/GPU-Vorschau)</span>
<svg style="left:798.5px;top:45px;" width="5.5" height="5.5" viewBox="0 0 5.5 5.5"><path d="M0.6 0.6L4.9 4.9M4.9 0.6L0.6 4.9" stroke="#d8d8d8" stroke-width="1" fill="none"/></svg>
<svg style="left:609px;top:39.5px;" width="5" height="4" viewBox="0 0 5 4"><path d="M0.5 0.5L2 2L0.5 3.5M2.8 0.5L4.3 2L2.8 3.5" stroke="#aaa" stroke-width="0.8" fill="none"/></svg>
<div style="left:610px;top:48.5px;width:16px;height:1.5px;background:#474747;"></div>
<div style="left:609px;top:57px;width:18px;height:15px;background:#2f2f2f;"></div>
<svg style="left:609px;top:56.7px;" width="18" height="16" viewBox="0 0 18 16"><g transform="translate(9 8) scale(0.9) translate(-9 -8)"><path d="M6 2.5L13.5 9L9.4 9.4L6.4 12.6Z" fill="none" stroke="#f2f2f2" stroke-width="1.1" stroke-linejoin="round"/></g></svg>
<svg style="left:609px;top:72.8px;" width="18" height="16" viewBox="0 0 18 16"><g transform="translate(9 8) scale(0.9) translate(-9 -8)"><path d="M5.5 2L14 9.6L9.6 9.8L5.9 13.4Z" fill="#c8c8c8"/></g><path d="M17.2 12.3V15.2H14.3Z" fill="#c8c8c8"/></svg>
<svg style="left:609px;top:88px;" width="18" height="16" viewBox="0 0 18 16"><g transform="translate(9 8) scale(0.9) translate(-9 -8)"><path d="M3.5 13L10.5 6" stroke="#c8c8c8" stroke-width="1.7" fill="none"/><path d="M12 1.8V4.6M10.6 3.2H13.4M8.2 2.5L8.9 3.2M14.5 5.6V7.4M13.6 6.5H15.4" stroke="#c8c8c8" stroke-width="0.9"/></g></svg>
<svg style="left:609px;top:104px;" width="18" height="16" viewBox="0 0 18 16"><g transform="translate(9 8) scale(0.9) translate(-9 -8)"><path d="M4.5 10.5C2.5 9.5 2 7 3.6 5.2C5.4 3.2 9.6 2.6 12.2 4C14.6 5.2 14.4 7.6 12.6 8.6" fill="none" stroke="#c8c8c8" stroke-width="1.2"/><path d="M4.5 10.5C5.6 9.6 6.6 10.6 5.8 11.8C5.2 12.8 4.4 13.2 3.8 14" fill="none" stroke="#c8c8c8" stroke-width="1.2"/><path d="M8 6L14.5 11.2L11.4 11.4L9.6 14Z" fill="#c8c8c8"/></g></svg>
<svg style="left:609px;top:122.5px;" width="18" height="16" viewBox="0 0 18 16"><g transform="translate(9 8) scale(0.9) translate(-9 -8)"><path d="M4 13.5L5 9.5L10.5 4L13.5 7L8 12.5Z" fill="#c8c8c8"/><path d="M11.2 3.2L12.6 1.8L15.6 4.8L14.2 6.2Z" fill="#c8c8c8"/><path d="M4.4 13.1L8 9.6" stroke="#535353" stroke-width="0.9"/><circle cx="8.4" cy="9.1" r="0.9" fill="#535353"/></g><path d="M17.2 12.3V15.2H14.3Z" fill="#c8c8c8"/></svg>
<svg style="left:609px;top:138px;" width="18" height="16" viewBox="0 0 18 16"><g transform="translate(9 8) scale(0.9) translate(-9 -8)"><path d="M6 13L7 9.6L11.5 5L14.3 7.8L9.6 12.2Z" fill="#c8c8c8"/><path d="M12.2 4.2L13.4 3L16.2 5.8L15 7Z" fill="#c8c8c8"/><circle cx="9.8" cy="9.2" r="0.9" fill="#535353"/><path d="M2.2 3.6C1.4 6.8 2.4 9.8 4.2 11.2C5.6 12.2 6.2 13.6 4.6 14.4" fill="none" stroke="#c8c8c8" stroke-width="1.2"/></g></svg>
<svg style="left:609px;top:154.4px;" width="18" height="16" viewBox="0 0 18 16"><g transform="translate(9 8) scale(0.9) translate(-9 -8)"><path d="M3.8 2.6H14.2V5.6H13.2C13 4.4 12.6 3.9 11.4 3.9H10V12C10 12.8 10.4 13 11.6 13.1V14H6.4V13.1C7.6 13 8 12.8 8 12V3.9H6.6C5.4 3.9 5 4.4 4.8 5.6H3.8Z" fill="#c8c8c8"/></g><path d="M17.2 12.3V15.2H14.3Z" fill="#c8c8c8"/></svg>
<svg style="left:609px;top:169.8px;" width="18" height="16" viewBox="0 0 18 16"><g transform="translate(9 8) scale(0.9) translate(-9 -8)"><path d="M3.5 13.5L14 3" stroke="#c8c8c8" stroke-width="1.3"/></g><path d="M17.2 12.3V15.2H14.3Z" fill="#c8c8c8"/></svg>
<svg style="left:609px;top:185px;" width="18" height="16" viewBox="0 0 18 16"><g transform="translate(9 8) scale(0.9) translate(-9 -8)"><rect x="3.2" y="3.2" width="11.6" height="9.6" fill="#6e6e6e" stroke="#c8c8c8" stroke-width="1.1"/></g><path d="M17.2 12.3V15.2H14.3Z" fill="#c8c8c8"/></svg>
<svg style="left:609px;top:201.5px;" width="18" height="16" viewBox="0 0 18 16"><g transform="translate(9 8) scale(0.9) translate(-9 -8)"><path d="M14.6 1.6L15.6 2.6L9 10.6L7.2 9Z" fill="#c8c8c8"/><path d="M6.6 9.7L8.3 11.3C7.6 13.6 5 14.6 3 14C4.6 13 4.6 10.4 6.6 9.7Z" fill="#c8c8c8"/></g><path d="M17.2 12.3V15.2H14.3Z" fill="#c8c8c8"/></svg>
<svg style="left:609px;top:217px;" width="18" height="16" viewBox="0 0 18 16"><g transform="translate(9 8) scale(0.9) translate(-9 -8)"><circle cx="6.6" cy="8.6" r="3.6" fill="none" stroke="#c8c8c8" stroke-width="1.2"/><path d="M6.6 8.6C8 8.6 8.4 10 7.4 10.6" fill="none" stroke="#c8c8c8" stroke-width="1.2"/><path d="M14.6 2L15.6 3L8.8 12.4L7.4 13L7.6 11.4Z" fill="#c8c8c8"/></g><path d="M17.2 12.3V15.2H14.3Z" fill="#c8c8c8"/></svg>
<svg style="left:609px;top:233.4px;" width="18" height="16" viewBox="0 0 18 16"><g transform="translate(9 8) scale(0.9) translate(-9 -8)"><path d="M9.6 2L15 7.4L10 12.4L4.6 7Z" fill="#c8c8c8"/><path d="M4 7.6L9.4 13L8 14.4H5L2.6 12Z" fill="#9a9a9a"/></g><path d="M17.2 12.3V15.2H14.3Z" fill="#c8c8c8"/></svg>
<svg style="left:609px;top:251px;" width="18" height="16" viewBox="0 0 18 16"><g transform="translate(9 8) scale(0.9) translate(-9 -8)"><path d="M6.2 4.2C9.6 2.2 14 4.6 14 8.6C14 11.8 11.4 14 8.6 14C5.8 14 3.4 11.8 3.4 9" fill="none" stroke="#c8c8c8" stroke-width="1.2"/><path d="M3 2L7.6 2.8L4.4 6.4Z" fill="#c8c8c8"/></g><path d="M17.2 12.3V15.2H14.3Z" fill="#c8c8c8"/></svg>
<svg style="left:609px;top:267.7px;" width="18" height="16" viewBox="0 0 18 16"><g transform="translate(9 8) scale(0.9) translate(-9 -8)"><rect x="2.6" y="6.6" width="7" height="7" fill="none" stroke="#c8c8c8" stroke-width="1.2"/><rect x="6.6" y="2.4" width="9" height="9" fill="none" stroke="#c8c8c8" stroke-width="1.2"/><path d="M10 8L14 4M11.4 3.8H14.2V6.6" fill="none" stroke="#c8c8c8" stroke-width="1.2"/></g><path d="M17.2 12.3V15.2H14.3Z" fill="#c8c8c8"/></svg>
<svg style="left:609px;top:283px;" width="18" height="16" viewBox="0 0 18 16"><g transform="translate(9 8) scale(0.9) translate(-9 -8)"><path d="M2.4 12.6C5 12 4.6 8.4 7 8C9.6 7.6 9 11.8 11.6 11.4C13.4 11.2 13.6 8.6 15.4 8.4" fill="none" stroke="#c8c8c8" stroke-width="1.2"/><path d="M3.4 8.2C4.6 4 6.6 2.4 8.4 3.2C10 4 9 6 10.8 6.4C12 6.6 12.6 5.6 13.6 4.4" fill="none" stroke="#c8c8c8" stroke-width="1.2"/><path d="M6 13.6C8 14.6 11 14.6 13.6 13" fill="none" stroke="#c8c8c8" stroke-width="1.2"/></g><path d="M17.2 12.3V15.2H14.3Z" fill="#c8c8c8"/></svg>
<svg style="left:609px;top:298.5px;" width="18" height="16" viewBox="0 0 18 16"><g transform="translate(9 8) scale(0.9) translate(-9 -8)"><path d="M9.4 1.8L15 7.4L13.8 8.2L12.4 7.8L10.2 10C10.6 11.2 10.4 12.2 9.8 12.8L4 7C4.6 6.4 5.6 6.2 6.8 6.6L9 4.4L8.6 3Z" fill="#c8c8c8"/><path d="M6.4 10L2.6 14.2" stroke="#c8c8c8" stroke-width="1.3"/></g><path d="M17.2 12.3V15.2H14.3Z" fill="#c8c8c8"/></svg>
<svg style="left:609px;top:314.6px;" width="18" height="16" viewBox="0 0 18 16"><g transform="translate(9 8) scale(0.9) translate(-9 -8)"><circle cx="6.4" cy="6.6" r="3.8" fill="none" stroke="#c8c8c8" stroke-width="1.2"/><path d="M6.4 6.6H12.6V12.4H6.4Z" fill="none" stroke="#c8c8c8" stroke-width="1.2" opacity="0.8"/><path d="M9.6 7.6L15.6 12L12.8 12.2L11.2 14.6Z" fill="#c8c8c8"/></g><path d="M17.2 12.3V15.2H14.3Z" fill="#c8c8c8"/></svg>
<svg style="left:609px;top:330.5px;" width="18" height="16" viewBox="0 0 18 16"><g transform="translate(9 8) scale(0.9) translate(-9 -8)"><path d="M3.4 2.6V13.6H14.4Z" fill="none" stroke="#c8c8c8" stroke-width="1.2"/><path d="M3.4 6.2L8.6 13.6M3.4 9.8L6 13.6M6.4 5.8V13.6M9.6 9V13.6M3.4 13.6L8 7.4" stroke="#c8c8c8" stroke-width="0.8" fill="none"/><path d="M8 7.4L14.4 13.6" stroke="#8a8a8a" stroke-width="0.8"/></g><path d="M17.2 12.3V15.2H14.3Z" fill="#c8c8c8"/></svg>
<svg style="left:609px;top:349px;" width="18" height="16" viewBox="0 0 18 16"><g transform="translate(9 8) scale(0.9) translate(-9 -8)"><rect x="3" y="3.2" width="12" height="9.6" fill="none" stroke="#c8c8c8" stroke-width="1.2"/><path d="M3 8C6 6.4 9 9.6 15 7.6M9 3.2C7.6 6.4 10.4 9.6 9 12.8M3 5.4L15 10.6M6 3.2L12 12.8" stroke="#c8c8c8" stroke-width="0.8" fill="none"/><rect x="4" y="4.2" width="3.6" height="2.6" fill="#c8c8c8" opacity="0.7"/><rect x="10.6" y="9" width="3.6" height="2.8" fill="#c8c8c8" opacity="0.7"/></g></svg>
<svg style="left:612.5px;top:367px;" width="11" height="11" viewBox="0 0 11 11"><defs><linearGradient id="gd" x1="0" x2="1" y1="0" y2="0"><stop offset="0" stop-color="#dcdcdc"/><stop offset="1" stop-color="#565656"/></linearGradient></defs><rect x="0.6" y="0.6" width="9.8" height="9.8" fill="url(#gd)" stroke="#c8c8c8" stroke-width="1.1"/></svg>
<svg style="left:609px;top:381.7px;" width="18" height="16" viewBox="0 0 18 16"><g transform="translate(9 8) scale(0.9) translate(-9 -8)"><path d="M12 2C13.2 0.8 15.6 3 14.4 4.4L12.6 6.2L13.4 7L12.4 8L8.4 4L9.4 3L10.2 3.8Z" fill="#c8c8c8"/><path d="M9.4 6L4 11.4L3.4 13.6L2.6 14.4" fill="none" stroke="#c8c8c8" stroke-width="1.2"/><path d="M10.8 7.4L5.4 12.8L3.6 13.4" fill="none" stroke="#c8c8c8" stroke-width="1.2"/></g><path d="M17.2 12.3V15.2H14.3Z" fill="#c8c8c8"/></svg>
<svg style="left:609px;top:397px;" width="18" height="16" viewBox="0 0 18 16"><g transform="translate(9 8) scale(0.9) translate(-9 -8)"><rect x="2.6" y="2.6" width="6" height="5" fill="#c8c8c8"/><rect x="4.6" y="4.6" width="6" height="5" fill="#9c9c9c"/><circle cx="11.6" cy="9.8" r="3.4" fill="none" stroke="#c8c8c8" stroke-width="1.2"/></g></svg>
<svg style="left:609px;top:416px;" width="18" height="16" viewBox="0 0 18 16"><g transform="translate(9 8) scale(0.9) translate(-9 -8)"><rect x="6.8" y="5.4" width="7" height="8.8" rx="1" fill="none" stroke="#c8c8c8" stroke-width="1.2"/><circle cx="10.3" cy="9.6" r="1.7" fill="none" stroke="#c8c8c8" stroke-width="1.2"/><path d="M8.6 5.2V3.4H12V5.2M9 2.6H7" fill="none" stroke="#c8c8c8" stroke-width="1.2"/><path d="M2.6 3V7.6M2.6 3H5" stroke="#c8c8c8" stroke-width="1"/></g><path d="M17.2 12.3V15.2H14.3Z" fill="#c8c8c8"/></svg>
<svg style="left:609px;top:431.4px;" width="18" height="16" viewBox="0 0 18 16"><g transform="translate(9 8) scale(0.9) translate(-9 -8)"><path d="M3.2 1.8V13.6H15" fill="none" stroke="#c8c8c8" stroke-width="1.2"/><rect x="5.4" y="8" width="2" height="5" fill="#c8c8c8"/><rect x="8.6" y="3.6" width="2" height="9.4" fill="#c8c8c8"/><rect x="11.8" y="6.4" width="2" height="6.6" fill="#c8c8c8"/></g><path d="M17.2 12.3V15.2H14.3Z" fill="#c8c8c8"/></svg>
<svg style="left:609px;top:450px;" width="18" height="16" viewBox="0 0 18 16"><g transform="translate(9 8) scale(0.9) translate(-9 -8)"><path d="M5.4 1.6V5.2M2 4.4H5.4" stroke="#c8c8c8" stroke-width="1"/><path d="M5.4 5.2H12L14.6 7.8V13.4H5.4Z" fill="none" stroke="#c8c8c8" stroke-width="1.2"/></g></svg>
<svg style="left:609px;top:467px;" width="18" height="16" viewBox="0 0 18 16"><g transform="translate(9 8) scale(0.9) translate(-9 -8)"><path d="M12.6 2L15 4.4L8.4 11.2L4.4 12.6L5.8 8.8Z" fill="none" stroke="#c8c8c8" stroke-width="1.2"/><path d="M4.6 12.4L2.6 14.6" stroke="#c8c8c8" stroke-width="1.2"/><path d="M10.8 3.8L13.2 6.2" stroke="#c8c8c8" stroke-width="1"/></g><path d="M17.2 12.3V15.2H14.3Z" fill="#c8c8c8"/></svg>
<svg style="left:609px;top:482px;" width="18" height="16" viewBox="0 0 18 16"><g transform="translate(9 8) scale(0.9) translate(-9 -8)"><path d="M5.6 8.4V4.2C5.6 3.2 7 3.2 7 4.2V2.8C7 1.8 8.5 1.8 8.5 2.8V2.4C8.5 1.4 10 1.4 10 2.4V3.4C10 2.4 11.5 2.4 11.5 3.4V5.2C11.5 4.2 13 4.2 13 5.2V9.6C13 12.4 11.6 14.4 9 14.4C6.8 14.4 5.8 13.2 4.6 11.2L2.8 8.4C2.2 7.4 3.6 6.6 4.4 7.6Z" fill="#c8c8c8"/></g><path d="M17.2 12.3V15.2H14.3Z" fill="#c8c8c8"/></svg>
<svg style="left:609px;top:498px;" width="18" height="16" viewBox="0 0 18 16"><g transform="translate(9 8) scale(0.9) translate(-9 -8)"><circle cx="7.4" cy="6.8" r="4.2" fill="none" stroke="#c8c8c8" stroke-width="1.2"/><path d="M10.4 10L14.6 14.2" stroke="#c8c8c8" stroke-width="1.7"/></g></svg>
<svg style="left:608.5px;top:519px;" width="8" height="8" viewBox="0 0 8 8"><rect x="0.6" y="0.6" width="4.4" height="4.4" fill="#fff" stroke="#222" stroke-width="0.6"/><rect x="3" y="3" width="4.4" height="4.4" fill="#222" stroke="#fff" stroke-width="0.8"/></svg>
<svg style="left:621.5px;top:519px;" width="8" height="8" viewBox="0 0 8 8"><path d="M1.8 3.8V1.8H6V6" fill="none" stroke="#c8c8c8" stroke-width="0.9"/><path d="M0.4 3L1.8 0.8L3.2 3ZM4.6 5.2L6 7.4L7.4 5.2Z" fill="#c8c8c8"/></svg>
<div style="left:608.7px;top:530.7px;width:12.2px;height:11.6px;background:#fff;border:1px solid #ccc;box-sizing:border-box;"></div>
<div style="left:616px;top:536.5px;width:12.5px;height:13px;background:#111;border:1.2px solid #eee;box-sizing:border-box;"></div>
<div style="left:619.6px;top:540px;width:5.3px;height:6px;background:#535353;border:1px solid #eee;box-sizing:border-box;"></div>
<div style="left:609.5px;top:553.5px;width:5px;height:6.5px;background:#f4f4f4;"></div>
<svg style="left:614.5px;top:553.5px;" width="5" height="6.5" viewBox="0 0 5 6.5"><defs><linearGradient id="gd2" x1="0" x2="1"><stop offset="0" stop-color="#eee"/><stop offset="1" stop-color="#444"/></linearGradient></defs><rect width="5" height="6.5" fill="url(#gd2)"/></svg>
<svg style="left:620.5px;top:553.5px;" width="7" height="6.5" viewBox="0 0 7 6.5"><rect width="7" height="6.5" fill="#f4f4f4"/><path d="M0.4 6.2L6.6 0.3" stroke="#e02020" stroke-width="1.4"/></svg>
<svg style="left:612.5px;top:564.5px;" width="11" height="11" viewBox="0 0 11 11"><circle cx="4.6" cy="4.6" r="3.2" fill="none" stroke="#c8c8c8" stroke-width="1.2"/><rect x="4.4" y="4.4" width="5.4" height="5.4" fill="#bdbdbd"/></svg>
<svg style="left:611px;top:580px;" width="14" height="12" viewBox="0 0 14 12"><rect x="0.6" y="3.4" width="8.4" height="7" fill="#535353" stroke="#c8c8c8" stroke-width="1"/><rect x="4.6" y="0.6" width="8.6" height="7" fill="#6a6a6a" stroke="#c8c8c8" stroke-width="1"/></svg>
<span class="t" style="left:1070.5px;top:51.53px;font-size:8px;line-height:8px;color:#f4f4f4;font-weight:bold;transform:scaleX(0.8047);">Eigenschaften</span>
<span class="t" style="left:1123.7px;top:51.53px;font-size:8px;line-height:8px;color:#989898;font-weight:bold;transform:scaleX(0.7717);">Ebenen</span>
<span class="t" style="left:1157.5px;top:51.53px;font-size:8px;line-height:8px;color:#989898;font-weight:bold;transform:scaleX(0.8020);">Bibliotheken</span>
<span class="t" style="left:1070.6px;top:70.57px;font-size:8.3px;line-height:8.3px;color:#d6d6d6;transform:scaleX(0.7677);">Keine Auswahl</span>
<span class="t" style="left:1070.6px;top:91.97px;font-size:8.3px;line-height:8.3px;color:#d6d6d6;transform:scaleX(0.7957);">Dokument</span>
<span class="t" style="left:1101.2px;top:108.37px;font-size:8.3px;line-height:8.3px;color:#d6d6d6;transform:scaleX(0.7874);">Einheit:</span>
<div style="left:1128px;top:107.3px;width:52.6px;height:10.6px;background:#454545;border-radius:1.5px;"></div>
<span class="t" style="left:1131px;top:108.37px;font-size:8.3px;line-height:8.3px;color:#f0f0f0;transform:scaleX(0.7782);">Pixel</span>
<svg style="left:1172px;top:110.5px;" width="7" height="5" viewBox="0 0 7 5"><path d="M0.8 0.8L3.5 3.6L6.2 0.8" stroke="#e0e0e0" stroke-width="1.2" fill="none"/></svg>
<span class="t" style="left:1081.3px;top:127.57px;font-size:8.3px;line-height:8.3px;color:#d6d6d6;transform:scaleX(0.7725);">Zeichenfläche:</span>
<div style="left:1128px;top:126px;width:41px;height:11.2px;background:#454545;border-radius:1.5px 0 0 1.5px;"></div>
<div style="left:1169.5px;top:126px;width:11px;height:11.2px;background:#4b4b4b;border-radius:0 1.5px 1.5px 0;"></div>
<span class="t" style="left:1129.6px;top:127.57px;font-size:8.3px;line-height:8.3px;color:#f0f0f0;">1</span>
<svg style="left:1171.5px;top:129.5px;" width="7" height="5" viewBox="0 0 7 5"><path d="M0.8 0.8L3.5 3.6L6.2 0.8" stroke="#e0e0e0" stroke-width="1.2" fill="none"/></svg>
<svg style="left:1189.5px;top:129px;" width="5" height="6" viewBox="0 0 5 6"><path d="M4.2 0.4V5.6L0.6 3Z" fill="#6a6a6a"/></svg>
<div style="left:1127.3px;top:144.2px;width:80px;height:13px;background:#535353;border:1px solid #6e6e6e;box-sizing:border-box;border-radius:2px;"></div>
<span class="t" style="left:1132.7px;top:146.37px;font-size:8.3px;line-height:8.3px;color:#f0f0f0;transform:scaleX(0.7697);">Zeichenflächen bearbeiten</span>
<span class="t" style="left:1070.6px;top:175.27px;font-size:8.3px;line-height:8.3px;color:#d6d6d6;transform:scaleX(0.7701);">Lineal und Raster</span>
<svg style="left:1129px;top:174px;" width="11" height="11" viewBox="0 0 11 11"><path d="M0.8 10.5V0.8H10.5V3.4H3.4V10.5Z" fill="#d6d6d6"/><path d="M5 3.4V1.8M7 3.4V1.8M9 3.4V1.8M3.4 5H1.8M3.4 7H1.8M3.4 9H1.8" stroke="#535353" stroke-width="0.6"/></svg>
<svg style="left:1149px;top:174px;" width="11" height="11" viewBox="0 0 11 11"><rect x="0.6" y="0.6" width="9.8" height="9.8" fill="none" stroke="#d6d6d6" stroke-width="1"/><path d="M3.9 0.6V10.4M7.1 0.6V10.4M0.6 3.9H10.4M0.6 7.1H10.4" stroke="#d6d6d6" stroke-width="0.9"/></svg>
<svg style="left:1168.5px;top:174px;" width="11" height="11" viewBox="0 0 11 11"><rect x="0.6" y="0.6" width="9.8" height="9.8" fill="none" stroke="#d6d6d6" stroke-width="1"/><path d="M3.9 0.6V10.4M7.1 0.6V10.4M0.6 3.9H10.4M0.6 7.1H10.4" stroke="#d6d6d6" stroke-width="0.9" stroke-dasharray="1.2 1.2"/></svg>
<span class="t" style="left:1070.6px;top:201.77px;font-size:8.3px;line-height:8.3px;color:#d6d6d6;transform:scaleX(0.7714);">Hilfslinien</span>
<div style="left:1127.3px;top:199px;width:14.4px;height:13.5px;background:#333;border-radius:2px;"></div>
<div style="left:1147px;top:199px;width:14.4px;height:13.5px;background:#333;border-radius:2px;"></div>
<div style="left:1166.7px;top:199px;width:14.4px;height:13.5px;background:#333;border-radius:2px;"></div>
<svg style="left:1127.3px;top:199px;" width="14.4" height="13.5" viewBox="0 0 14.4 13.5"><path d="M5 2V11.5M2 5H12.4M2 8.6H12.4" stroke="#ddd" stroke-width="0.9" fill="none"/></svg>
<svg style="left:1147px;top:199px;" width="14.4" height="13.5" viewBox="0 0 14.4 13.5"><path d="M4 2V11.5M7 2V7M2 5H12.4M2 8.4H7" stroke="#ddd" stroke-width="0.9" fill="none"/><rect x="8" y="8" width="4.6" height="3.6" fill="#ddd"/><path d="M9 8V6.8C9 5.6 11.6 5.6 11.6 6.8V8" stroke="#ddd" stroke-width="0.8" fill="none"/></svg>
<svg style="left:1166.7px;top:199px;" width="14.4" height="13.5" viewBox="0 0 14.4 13.5"><path d="M5 2V11.5M2 5H8" stroke="#ddd" stroke-width="0.9" fill="none"/><path d="M3 2.6L7 7M7 2.6L3 7" stroke="#ddd" stroke-width="0.6"/><path d="M10.6 5.4L8.4 8.8H10.2L9.4 11.6L12 7.8H10.2Z" fill="#ddd"/></svg>
<span class="t" style="left:1071px;top:227.77px;font-size:8.3px;line-height:8.3px;color:#d6d6d6;transform:scaleX(0.7797);">Ausrichten-Optionen</span>
<div style="left:1134.2px;top:225.5px;width:14.2px;height:13.5px;background:#333;border-radius:2px;"></div>
<div style="left:1173px;top:225.5px;width:14.6px;height:13.5px;background:#333;border-radius:2px;"></div>
<svg style="left:1134.2px;top:225.5px;" width="14.2" height="13.5" viewBox="0 0 14.2 13.5"><path d="M3.4 1.6V12" stroke="#ddd" stroke-width="0.9"/><circle cx="3.4" cy="6.8" r="1" fill="#ddd"/><path d="M6 4.6H9.6C12.4 4.6 12.4 9 9.6 9H6" stroke="#ddd" stroke-width="1.3" fill="none"/></svg>
<svg style="left:1154px;top:225.5px;" width="14.2" height="13.5" viewBox="0 0 14.2 13.5"><path d="M3.6 1.2V12.4M2 3H5.2M2 5H5.2M2 7H5.2M2 9H5.2M2 11H5.2" stroke="#ccc" stroke-width="0.8"/><path d="M6.4 4.6H9.8C12.6 4.6 12.6 9 9.8 9H6.4" stroke="#ccc" stroke-width="1.3" fill="none"/></svg>
<svg style="left:1173px;top:225.5px;" width="14.6" height="13.5" viewBox="0 0 14.6 13.5"><rect x="2.6" y="2.2" width="1.8" height="1.8" fill="#ddd"/><rect x="2.6" y="5.8" width="1.8" height="1.8" fill="#ddd"/><rect x="2.6" y="9.4" width="1.8" height="1.8" fill="#ddd"/><path d="M6.4 4.6H9.8C12.6 4.6 12.6 9 9.8 9H6.4" stroke="#ddd" stroke-width="1.3" fill="none"/></svg>
<span class="t" style="left:1071px;top:250.77px;font-size:8.3px;line-height:8.3px;color:#d6d6d6;transform:scaleX(0.7772);">Voreinstellungen</span>
<span class="t" style="left:1071px;top:267.77px;font-size:8.3px;line-height:8.3px;color:#d6d6d6;transform:scaleX(0.8008);">Schritte per Tastatur:</span>
<div style="left:1135.6px;top:264.8px;width:37.2px;height:11.2px;background:#454545;border-radius:1.5px;"></div>
<span class="t" style="left:1137.5px;top:266.17px;font-size:8.3px;line-height:8.3px;color:#f0f0f0;transform:scaleX(0.8286);">1 px</span>
<div style="left:1071.8px;top:283.1px;width:8px;height:8.4px;background:#505050;border:1px solid #8a8a8a;box-sizing:border-box;border-radius:1px;"></div>
<span class="t" style="left:1082.3px;top:283.07px;font-size:8.3px;line-height:8.3px;color:#e8e8e8;transform:scaleX(0.7787);">Vorschaubegrenzungen verwenden</span>
<div style="left:1071.8px;top:298.6px;width:8px;height:8.4px;background:#505050;border:1px solid #8a8a8a;box-sizing:border-box;border-radius:1px;"></div>
<span class="t" style="left:1082.3px;top:298.57px;font-size:8.3px;line-height:8.3px;color:#e8e8e8;transform:scaleX(0.7748);">Ecken skalieren</span>
<div style="left:1071.8px;top:314.6px;width:8px;height:8.4px;background:#505050;border:1px solid #8a8a8a;box-sizing:border-box;border-radius:1px;"></div>
<span class="t" style="left:1082.3px;top:314.57px;font-size:8.3px;line-height:8.3px;color:#e8e8e8;transform:scaleX(0.7878);">Konturen und Effekte skalieren</span>
<span class="t" style="left:1071px;top:343.57px;font-size:8.3px;line-height:8.3px;color:#d6d6d6;transform:scaleX(0.7764);">Schnellaktionen</span>
<div style="left:1070.4px;top:357.8px;width:140px;height:13px;background:#535353;border:1px solid #6e6e6e;box-sizing:border-box;border-radius:2px;"></div>
<span class="t" style="left:1109.7px;top:360.37px;font-size:8.3px;line-height:8.3px;color:#f0f0f0;transform:scaleX(0.7921);">Dokument einrichten</span>
<div style="left:1070.4px;top:377.8px;width:140px;height:13.2px;background:#535353;border:1px solid #6e6e6e;box-sizing:border-box;border-radius:2px;"></div>
<span class="t" style="left:1115.4px;top:380.37px;font-size:8.3px;line-height:8.3px;color:#f0f0f0;transform:scaleX(0.7869);">Voreinstellungen</span>
<div style="left:1053.6px;top:350.6px;width:8.4px;height:17px;background:#606060;border-radius:4px;"></div>
<svg style="left:1054px;top:59.8px;" width="7" height="5" viewBox="0 0 7 5"><path d="M0.9 4.1L3.5 1.4L6.1 4.1" stroke="#9a9a9a" stroke-width="1.3" fill="none"/></svg>
<svg style="left:1054px;top:654.5px;" width="7" height="5" viewBox="0 0 7 5"><path d="M0.8 0.8L3.5 3.8L6.2 0.8" stroke="#8a8a8a" stroke-width="1" fill="none"/></svg>
<div style="left:635px;top:663.5px;width:33px;height:8px;background:#444;"></div>
<span class="t" style="left:635.8px;top:663.63px;font-size:8px;line-height:8px;color:#e8e8e8;transform:scaleX(0.8868);">64%</span>
<svg style="left:669.5px;top:665.5px;" width="7" height="5" viewBox="0 0 7 5"><path d="M0.8 0.8L3.5 3.6L6.2 0.8" stroke="#e0e0e0" stroke-width="1.2" fill="none"/></svg>
<svg style="left:685px;top:664.5px;" width="6" height="6" viewBox="0 0 6 6"><rect x="0.5" y="0.5" width="1" height="5" fill="#6c6c6c"/><path d="M5.5 0.5V5.5L2 3Z" fill="#6c6c6c"/></svg>
<svg style="left:696.5px;top:664.5px;" width="5" height="6" viewBox="0 0 5 6"><path d="M4.5 0.5V5.5L1 3Z" fill="#6c6c6c"/></svg>
<div style="left:706.5px;top:663.5px;width:26.5px;height:8px;background:#444;"></div>
<span class="t" style="left:708px;top:663.63px;font-size:8px;line-height:8px;color:#f0f0f0;">1</span>
<svg style="left:735.5px;top:665.5px;" width="7" height="5" viewBox="0 0 7 5"><path d="M0.8 0.8L3.5 3.6L6.2 0.8" stroke="#e0e0e0" stroke-width="1.2" fill="none"/></svg>
<svg style="left:750px;top:664.5px;" width="5" height="6" viewBox="0 0 5 6"><path d="M0.5 0.5V5.5L4 3Z" fill="#6c6c6c"/></svg>
<svg style="left:761px;top:664.5px;" width="6" height="6" viewBox="0 0 6 6"><rect x="4.5" y="0.5" width="1" height="5" fill="#6c6c6c"/><path d="M0.5 0.5V5.5L4 3Z" fill="#6c6c6c"/></svg>
<span class="t" style="left:825.5px;top:663.97px;font-size:7.6px;line-height:7.6px;color:#d0d0d0;transform:scaleX(0.8737);">Auswahl</span>
<svg style="left:907.5px;top:664.5px;" width="5" height="6" viewBox="0 0 5 6"><path d="M0.5 0.3V5.7L4.4 3Z" fill="#eee"/></svg>
<div style="left:916px;top:663.5px;width:136px;height:8.5px;background:#575757;"></div>
<svg style="left:919px;top:665px;" width="5" height="5" viewBox="0 0 5 5"><path d="M3.4 0.6L1.2 2.5L3.4 4.4" stroke="#999" stroke-width="0.9" fill="none"/></svg>
<svg style="left:1044px;top:665px;" width="5" height="5" viewBox="0 0 5 5"><path d="M1.6 0.6L3.8 2.5L1.6 4.4" stroke="#999" stroke-width="0.9" fill="none"/></svg>
<div style="left:973.5px;top:664px;width:17.5px;height:7.5px;background:#6a6a6a;border-radius:4px;"></div>
<div style="left:603px;top:0px;width:597px;height:1px;background:#3c3c3c;"></div>
</div></body></html>
